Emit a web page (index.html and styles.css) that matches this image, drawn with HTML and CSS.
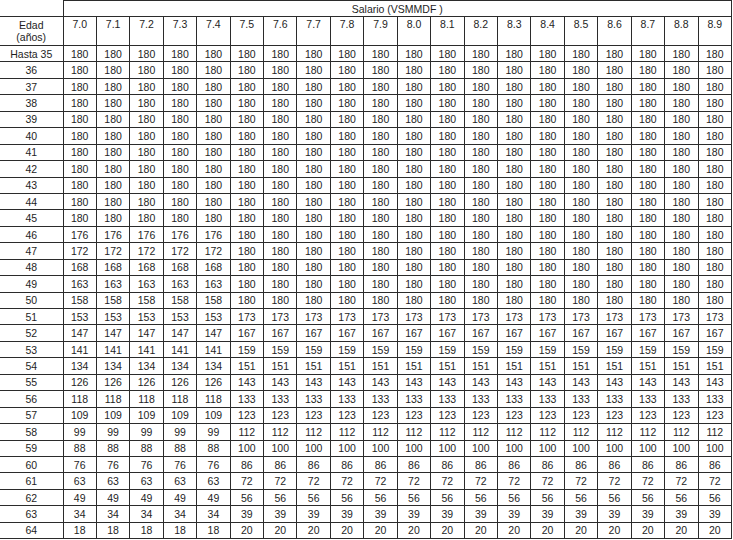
FILE: index.html
```
<!DOCTYPE html>
<html lang="es">
<head>
<meta charset="utf-8">
<title>Tabla de pensión</title>
<link rel="stylesheet" href="styles.css">
</head>
<body>
<table class="grid">
<colgroup><col class="c-age"><col span="20"></colgroup>
<thead>
<tr class="r-title"><td class="corner"></td><td class="title" colspan="20">Salario (VSMMDF )</td></tr>
<tr class="r-head"><td class="age">Edad<br>(años)</td><td>7.0</td><td>7.1</td><td>7.2</td><td>7.3</td><td>7.4</td><td>7.5</td><td>7.6</td><td>7.7</td><td>7.8</td><td>7.9</td><td>8.0</td><td>8.1</td><td>8.2</td><td>8.3</td><td>8.4</td><td>8.5</td><td>8.6</td><td>8.7</td><td>8.8</td><td>8.9</td></tr>
</thead>
<tbody>
<tr><td class="age">Hasta 35</td><td>180</td><td>180</td><td>180</td><td>180</td><td>180</td><td>180</td><td>180</td><td>180</td><td>180</td><td>180</td><td>180</td><td>180</td><td>180</td><td>180</td><td>180</td><td>180</td><td>180</td><td>180</td><td>180</td><td>180</td></tr>
<tr><td class="age">36</td><td>180</td><td>180</td><td>180</td><td>180</td><td>180</td><td>180</td><td>180</td><td>180</td><td>180</td><td>180</td><td>180</td><td>180</td><td>180</td><td>180</td><td>180</td><td>180</td><td>180</td><td>180</td><td>180</td><td>180</td></tr>
<tr><td class="age">37</td><td>180</td><td>180</td><td>180</td><td>180</td><td>180</td><td>180</td><td>180</td><td>180</td><td>180</td><td>180</td><td>180</td><td>180</td><td>180</td><td>180</td><td>180</td><td>180</td><td>180</td><td>180</td><td>180</td><td>180</td></tr>
<tr><td class="age">38</td><td>180</td><td>180</td><td>180</td><td>180</td><td>180</td><td>180</td><td>180</td><td>180</td><td>180</td><td>180</td><td>180</td><td>180</td><td>180</td><td>180</td><td>180</td><td>180</td><td>180</td><td>180</td><td>180</td><td>180</td></tr>
<tr><td class="age">39</td><td>180</td><td>180</td><td>180</td><td>180</td><td>180</td><td>180</td><td>180</td><td>180</td><td>180</td><td>180</td><td>180</td><td>180</td><td>180</td><td>180</td><td>180</td><td>180</td><td>180</td><td>180</td><td>180</td><td>180</td></tr>
<tr><td class="age">40</td><td>180</td><td>180</td><td>180</td><td>180</td><td>180</td><td>180</td><td>180</td><td>180</td><td>180</td><td>180</td><td>180</td><td>180</td><td>180</td><td>180</td><td>180</td><td>180</td><td>180</td><td>180</td><td>180</td><td>180</td></tr>
<tr><td class="age">41</td><td>180</td><td>180</td><td>180</td><td>180</td><td>180</td><td>180</td><td>180</td><td>180</td><td>180</td><td>180</td><td>180</td><td>180</td><td>180</td><td>180</td><td>180</td><td>180</td><td>180</td><td>180</td><td>180</td><td>180</td></tr>
<tr><td class="age">42</td><td>180</td><td>180</td><td>180</td><td>180</td><td>180</td><td>180</td><td>180</td><td>180</td><td>180</td><td>180</td><td>180</td><td>180</td><td>180</td><td>180</td><td>180</td><td>180</td><td>180</td><td>180</td><td>180</td><td>180</td></tr>
<tr><td class="age">43</td><td>180</td><td>180</td><td>180</td><td>180</td><td>180</td><td>180</td><td>180</td><td>180</td><td>180</td><td>180</td><td>180</td><td>180</td><td>180</td><td>180</td><td>180</td><td>180</td><td>180</td><td>180</td><td>180</td><td>180</td></tr>
<tr><td class="age">44</td><td>180</td><td>180</td><td>180</td><td>180</td><td>180</td><td>180</td><td>180</td><td>180</td><td>180</td><td>180</td><td>180</td><td>180</td><td>180</td><td>180</td><td>180</td><td>180</td><td>180</td><td>180</td><td>180</td><td>180</td></tr>
<tr><td class="age">45</td><td>180</td><td>180</td><td>180</td><td>180</td><td>180</td><td>180</td><td>180</td><td>180</td><td>180</td><td>180</td><td>180</td><td>180</td><td>180</td><td>180</td><td>180</td><td>180</td><td>180</td><td>180</td><td>180</td><td>180</td></tr>
<tr><td class="age">46</td><td>176</td><td>176</td><td>176</td><td>176</td><td>176</td><td>180</td><td>180</td><td>180</td><td>180</td><td>180</td><td>180</td><td>180</td><td>180</td><td>180</td><td>180</td><td>180</td><td>180</td><td>180</td><td>180</td><td>180</td></tr>
<tr><td class="age">47</td><td>172</td><td>172</td><td>172</td><td>172</td><td>172</td><td>180</td><td>180</td><td>180</td><td>180</td><td>180</td><td>180</td><td>180</td><td>180</td><td>180</td><td>180</td><td>180</td><td>180</td><td>180</td><td>180</td><td>180</td></tr>
<tr><td class="age">48</td><td>168</td><td>168</td><td>168</td><td>168</td><td>168</td><td>180</td><td>180</td><td>180</td><td>180</td><td>180</td><td>180</td><td>180</td><td>180</td><td>180</td><td>180</td><td>180</td><td>180</td><td>180</td><td>180</td><td>180</td></tr>
<tr><td class="age">49</td><td>163</td><td>163</td><td>163</td><td>163</td><td>163</td><td>180</td><td>180</td><td>180</td><td>180</td><td>180</td><td>180</td><td>180</td><td>180</td><td>180</td><td>180</td><td>180</td><td>180</td><td>180</td><td>180</td><td>180</td></tr>
<tr><td class="age">50</td><td>158</td><td>158</td><td>158</td><td>158</td><td>158</td><td>180</td><td>180</td><td>180</td><td>180</td><td>180</td><td>180</td><td>180</td><td>180</td><td>180</td><td>180</td><td>180</td><td>180</td><td>180</td><td>180</td><td>180</td></tr>
<tr><td class="age">51</td><td>153</td><td>153</td><td>153</td><td>153</td><td>153</td><td>173</td><td>173</td><td>173</td><td>173</td><td>173</td><td>173</td><td>173</td><td>173</td><td>173</td><td>173</td><td>173</td><td>173</td><td>173</td><td>173</td><td>173</td></tr>
<tr><td class="age">52</td><td>147</td><td>147</td><td>147</td><td>147</td><td>147</td><td>167</td><td>167</td><td>167</td><td>167</td><td>167</td><td>167</td><td>167</td><td>167</td><td>167</td><td>167</td><td>167</td><td>167</td><td>167</td><td>167</td><td>167</td></tr>
<tr><td class="age">53</td><td>141</td><td>141</td><td>141</td><td>141</td><td>141</td><td>159</td><td>159</td><td>159</td><td>159</td><td>159</td><td>159</td><td>159</td><td>159</td><td>159</td><td>159</td><td>159</td><td>159</td><td>159</td><td>159</td><td>159</td></tr>
<tr><td class="age">54</td><td>134</td><td>134</td><td>134</td><td>134</td><td>134</td><td>151</td><td>151</td><td>151</td><td>151</td><td>151</td><td>151</td><td>151</td><td>151</td><td>151</td><td>151</td><td>151</td><td>151</td><td>151</td><td>151</td><td>151</td></tr>
<tr><td class="age">55</td><td>126</td><td>126</td><td>126</td><td>126</td><td>126</td><td>143</td><td>143</td><td>143</td><td>143</td><td>143</td><td>143</td><td>143</td><td>143</td><td>143</td><td>143</td><td>143</td><td>143</td><td>143</td><td>143</td><td>143</td></tr>
<tr><td class="age">56</td><td>118</td><td>118</td><td>118</td><td>118</td><td>118</td><td>133</td><td>133</td><td>133</td><td>133</td><td>133</td><td>133</td><td>133</td><td>133</td><td>133</td><td>133</td><td>133</td><td>133</td><td>133</td><td>133</td><td>133</td></tr>
<tr><td class="age">57</td><td>109</td><td>109</td><td>109</td><td>109</td><td>109</td><td>123</td><td>123</td><td>123</td><td>123</td><td>123</td><td>123</td><td>123</td><td>123</td><td>123</td><td>123</td><td>123</td><td>123</td><td>123</td><td>123</td><td>123</td></tr>
<tr><td class="age">58</td><td>99</td><td>99</td><td>99</td><td>99</td><td>99</td><td>112</td><td>112</td><td>112</td><td>112</td><td>112</td><td>112</td><td>112</td><td>112</td><td>112</td><td>112</td><td>112</td><td>112</td><td>112</td><td>112</td><td>112</td></tr>
<tr><td class="age">59</td><td>88</td><td>88</td><td>88</td><td>88</td><td>88</td><td>100</td><td>100</td><td>100</td><td>100</td><td>100</td><td>100</td><td>100</td><td>100</td><td>100</td><td>100</td><td>100</td><td>100</td><td>100</td><td>100</td><td>100</td></tr>
<tr><td class="age">60</td><td>76</td><td>76</td><td>76</td><td>76</td><td>76</td><td>86</td><td>86</td><td>86</td><td>86</td><td>86</td><td>86</td><td>86</td><td>86</td><td>86</td><td>86</td><td>86</td><td>86</td><td>86</td><td>86</td><td>86</td></tr>
<tr><td class="age">61</td><td>63</td><td>63</td><td>63</td><td>63</td><td>63</td><td>72</td><td>72</td><td>72</td><td>72</td><td>72</td><td>72</td><td>72</td><td>72</td><td>72</td><td>72</td><td>72</td><td>72</td><td>72</td><td>72</td><td>72</td></tr>
<tr><td class="age">62</td><td>49</td><td>49</td><td>49</td><td>49</td><td>49</td><td>56</td><td>56</td><td>56</td><td>56</td><td>56</td><td>56</td><td>56</td><td>56</td><td>56</td><td>56</td><td>56</td><td>56</td><td>56</td><td>56</td><td>56</td></tr>
<tr><td class="age">63</td><td>34</td><td>34</td><td>34</td><td>34</td><td>34</td><td>39</td><td>39</td><td>39</td><td>39</td><td>39</td><td>39</td><td>39</td><td>39</td><td>39</td><td>39</td><td>39</td><td>39</td><td>39</td><td>39</td><td>39</td></tr>
<tr><td class="age">64</td><td>18</td><td>18</td><td>18</td><td>18</td><td>18</td><td>20</td><td>20</td><td>20</td><td>20</td><td>20</td><td>20</td><td>20</td><td>20</td><td>20</td><td>20</td><td>20</td><td>20</td><td>20</td><td>20</td><td>20</td></tr>
</tbody>
</table>
</body>
</html>
```
FILE: styles.css
```
html, body {
  margin: 0;
  padding: 0;
  background: #ffffff;
}

body {
  font-family: "Liberation Sans", Arial, sans-serif;
  font-size: 10.5px;
  color: #1e1e1e;
}

.grid {
  border-collapse: collapse;
  table-layout: fixed;
  width: 732px;
}

.c-age {
  width: 63px;
}

.grid td {
  border: 1px solid #2b2b2b;
  padding: 0;
  text-align: center;
  vertical-align: middle;
  line-height: 12px;
  height: 15.45px;
  white-space: nowrap;
  overflow: hidden;
}

.grid td.age {
  border-left: none;
}

.grid td.corner {
  border-top: none;
  border-left: none;
}

.r-title td {
  height: 15px;
}

.r-head td {
  height: 26px;
  vertical-align: top;
  padding-top: 2px;
  line-height: 11.5px;
}

.r-head td.age {
  line-height: 12px;
  padding-top: 2px;
}
```
